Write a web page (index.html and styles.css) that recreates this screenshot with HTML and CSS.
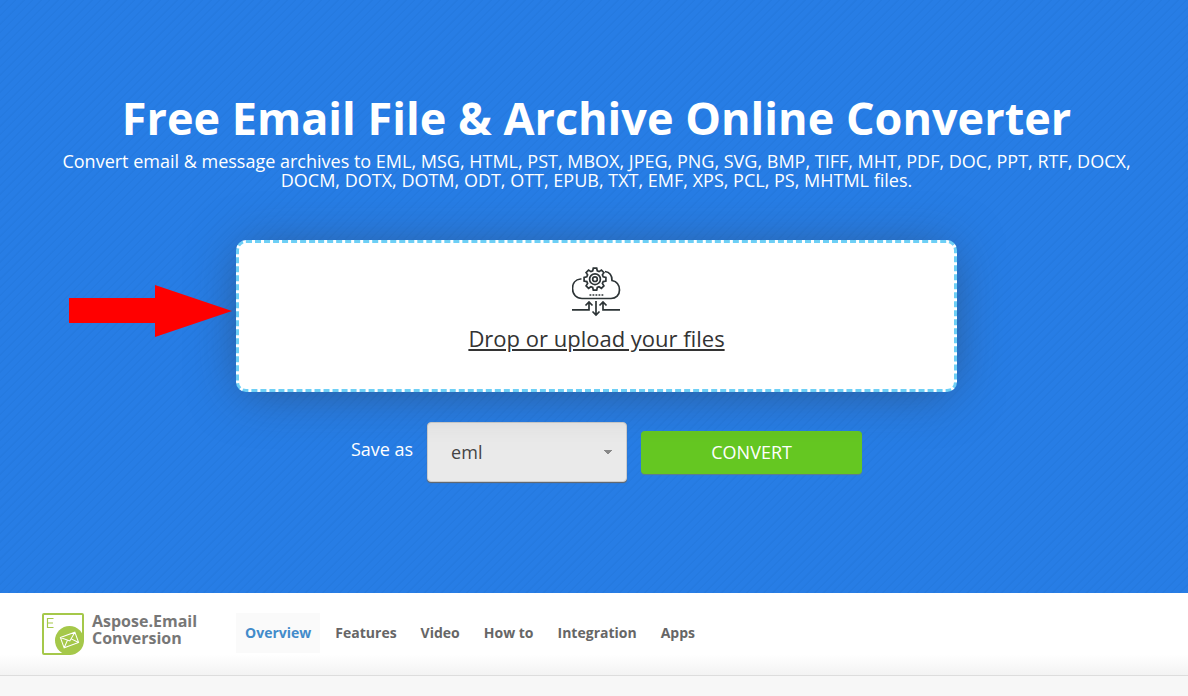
FILE: index.html
```html
<!DOCTYPE html>
<html lang="en">
<head>
<meta charset="utf-8">
<meta name="viewport" content="width=device-width, initial-scale=1">
<title>Free Email File &amp; Archive Online Converter</title>
<link rel="stylesheet" href="styles.css">
</head>
<body>
<main class="hero">
  <h1 class="hero-title">Free Email File &amp; Archive Online Converter</h1>
  <p class="hero-text">Convert email &amp; message archives to EML, MSG, HTML, PST, MBOX, JPEG, PNG, SVG, BMP, TIFF, MHT, PDF, DOC, PPT, RTF, DOCX, DOCM, DOTX, DOTM, ODT, OTT, EPUB, TXT, EMF, XPS, PCL, PS, MHTML files.</p>
  <form class="converter">
    <div class="upload">
      <label class="drop" for="files">
        <svg class="drop-icon" viewBox="1 0 50 50" aria-hidden="true" fill="none" stroke="#2d3436" stroke-width="1.7">
          <path d="M10.500 12A9 9 0 0 0 9.500 12C4.500 12.500 1.500 16.500 1.500 21.500C1.500 27.500 5.500 31.500 11 31.500H40C45 31.500 48.500 28 48.500 23C48.500 18 45.500 14.500 41 13.500C41 8.500 38.500 5 34 4.500"/>
          <path d="M21.700 3.900L22.300 1.200H25.700L26.300 3.900L28.100 4.600L30.400 3.100L32.900 5.600L31.400 7.900L32.200 9.800L34.900 10.400V14L32.200 14.600L31.400 16.500L32.900 18.800L30.400 21.300L28.100 19.800L26.300 20.500L25.700 23.200H22.300L21.700 20.500L19.900 19.800L17.600 21.300L15.100 18.800L16.600 16.500L15.800 14.600L13.100 14V10.400L15.800 9.800L16.600 7.900L15.100 5.600L17.600 3.100L19.900 4.600Z"/>
          <circle cx="24" cy="12.200" r="5.400"/>
          <circle cx="24" cy="12.200" r="2.300"/>
          <path d="M18.500 28H32.500" stroke-dasharray="1.800 1.200"/>
          <path d="M1 42.900H18V35M14.500 38.500L18 35L21.500 38.500M49 42.900H32V35M28.500 38.500L32 35L35.500 38.500M25 34V48M21.500 44.500L25 48L28.500 44.500"/>
        </svg>
        <span class="drop-text">Drop or upload your files</span>
        <input class="file-input" id="files" type="file" multiple>
      </label>
      <svg class="pointer" viewBox="0 0 163 52" aria-hidden="true"><path fill="#f00" d="M0 13H86V0L163 26L86 52V38H0Z"/></svg>
    </div>
    <div class="controls">
      <label class="save-label" for="format">Save as</label>
      <select class="format" id="format"><option>eml</option><option>msg</option><option>html</option><option>pst</option></select>
      <button class="convert" type="button">CONVERT</button>
    </div>
  </form>
</main>
<header class="product-bar">
  <a class="brand" href="#">
    <svg class="brand-icon" viewBox="0 0 42 42" aria-hidden="true" fill="none">
      <rect x="1" y="1" width="40" height="40" rx="1" stroke="#a5c84a" stroke-width="2"/>
      <path d="M42 28V42H28Z" fill="#fff"/>
      <path d="M11.500 5.500H5.500V14.500H11.500M5.500 10H11" stroke="#a5c84a" stroke-width="1.200"/>
      <circle cx="27.500" cy="27.500" r="14.500" fill="#a5c84a"/>
      <g transform="rotate(-20 27.500 27)" stroke="#fff" stroke-width="1"><path d="M19.800 21.500H35.200V32.500H19.800ZM19.800 21.500L27.500 28L35.200 21.500M19.800 32.500L25.500 26.500M35.200 32.500L29.500 26.500"/></g>
    </svg>
    <span class="brand-name">Aspose.Email<br>Conversion</span>
  </a>
  <nav class="tabs">
    <a class="tab tab-active" href="#">Overview</a>
    <a class="tab" href="#">Features</a>
    <a class="tab" href="#">Video</a>
    <a class="tab" href="#">How to</a>
    <a class="tab" href="#">Integration</a>
    <a class="tab" href="#">Apps</a>
  </nav>
</header>
</body>
</html>
```
FILE: styles.css
```css
* {
  box-sizing: border-box;
}

body {
  margin: 0;
  background: #f7f7f7;
  font-family: "Open Sans", "Noto Sans", sans-serif;
}

.hero {
  padding: 93px 55px 111px 60px;
  background: repeating-linear-gradient(135deg, #277de5 0 4px, #257ae0 5px 6px);
  color: #fff;
  text-align: center;
}

.hero-title {
  margin: 0;
  font-size: 45px;
  line-height: 50px;
  font-weight: 700;
}

.hero-text {
  margin: 9px 0 0;
  font-size: 18px;
  line-height: 19px;
}

.converter {
  max-width: 721px;
  margin: 50px auto 0;
}

.upload {
  position: relative;
}

.drop {
  display: flex;
  flex-direction: column;
  align-items: center;
  gap: 6px;
  padding: 24px 20px 36px;
  border: 3px dashed #6dcff6;
  border-radius: 10px;
  background: #fff;
  box-shadow: 0 4px 50px -6px rgba(50, 50, 50, 0.5);
  color: #333;
  cursor: pointer;
}

.drop-icon {
  width: 50px;
  height: 50px;
}

.drop-text {
  font-size: 22px;
  line-height: 30px;
  font-weight: 400;
  text-decoration: underline;
}

.file-input {
  position: absolute;
  width: 1px;
  height: 1px;
  opacity: 0;
}

.pointer {
  position: absolute;
  top: 45px;
  right: 100%;
  width: 163px;
  margin-right: 4px;
}

.controls {
  display: flex;
  justify-content: center;
  align-items: center;
  gap: 14px;
  margin-top: 30px;
  padding-left: 20px;
}

.save-label {
  padding-bottom: 6px;
  font-size: 18px;
  line-height: 24px;
}

.format {
  width: 200px;
  height: 60px;
  padding: 0 23px;
  appearance: none;
  border: 1px solid #ccc;
  border-radius: 4px;
  background-color: #eaeaea;
  background-image: linear-gradient(to bottom right, #888 50%, transparent 51%), linear-gradient(to bottom left, #888 50%, transparent 51%);
  background-repeat: no-repeat;
  background-size: 4px 5px;
  background-position: right 14px center, right 18px center;
  box-shadow: 0 1px 1px #666;
  color: #444;
  font: 400 18px "Open Sans", sans-serif;
}

.convert {
  width: 221px;
  height: 43px;
  border: 0;
  border-radius: 4px;
  background: #65c722;
  box-shadow: 0 1px 1px #607d8b;
  color: #fff;
  font: 400 18px "Open Sans", sans-serif;
}

.product-bar {
  display: flex;
  align-items: flex-start;
  gap: 39px;
  padding: 20px 42px;
  border-bottom: 1px solid #ddd;
  background: linear-gradient(#fff 75%, #f3f3f3);
}

.brand {
  display: flex;
  gap: 8px;
  color: #777;
  text-decoration: none;
}

.brand-icon {
  width: 42px;
  height: 42px;
}

.brand-name {
  font-size: 16px;
  line-height: 17px;
  font-weight: 700;
}

.tabs {
  display: flex;
  gap: 6px;
}

.tab {
  padding: 10px 9px;
  color: #666;
  font-size: 14px;
  line-height: 20px;
  font-weight: 700;
  text-decoration: none;
}

.tab-active {
  background: #fafafa;
  color: #428bca;
}
```
